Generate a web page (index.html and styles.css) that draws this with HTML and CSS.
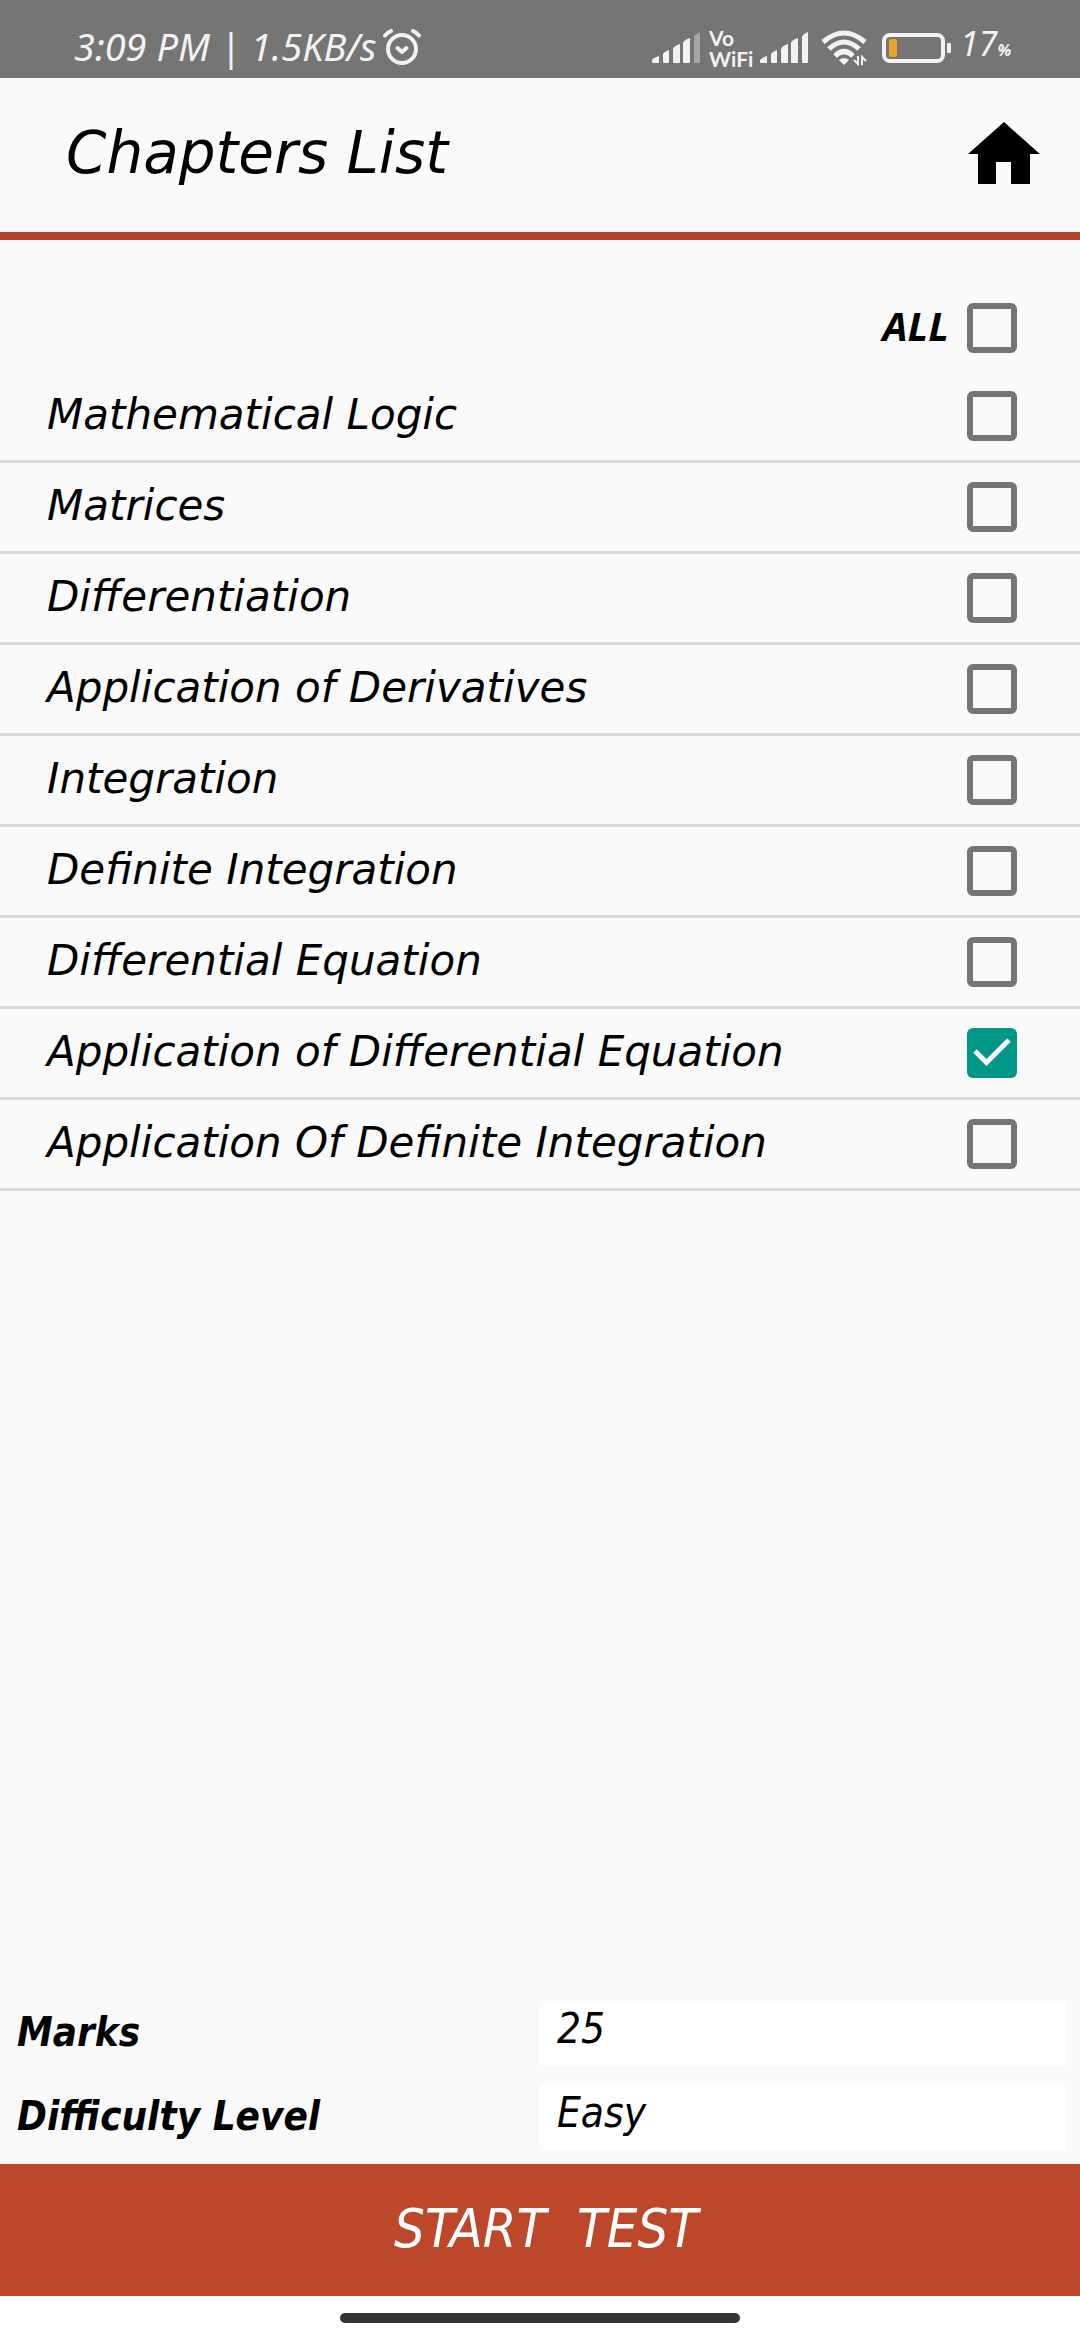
FILE: index.html
```html
<!DOCTYPE html>
<html lang="en">
<head>
  <meta charset="UTF-8">
  <meta name="viewport" content="width=device-width, initial-scale=1.0">
  <title>Chapters List</title>
  <link rel="stylesheet" href="styles.css">
</head>
<body>
  <div class="status-bar">
    <div class="status-left">
      <span>3:09 PM | 1.5KB/s</span>
      <svg class="alarm-icon" viewBox="0 0 40 38" width="40" height="38" fill="none" stroke="#f2f2f2" stroke-width="4" stroke-linecap="round">
        <circle cx="20" cy="20" r="14"/>
        <path d="M15.500 19L20 23L24.500 19" stroke-linejoin="round"/>
        <path d="M3 6.500Q5.500 3.500 9 2M31 2Q34.500 3.500 37 6.500"/>
      </svg>
    </div>
    <div class="status-right">
      <svg class="signal-icon" viewBox="0 0 48 32" width="48" height="32" fill="#f2f2f2">
        <path d="M0 28Q1 26 7 24V31H1Q0 31 0 30Z"/>
        <path d="M11 22Q12 20 17 18V30Q17 31 16 31H12Q11 31 11 30Z"/>
        <path d="M21 17Q22 14 28 12V30Q28 31 27 31H22Q21 31 21 30Z"/>
        <path d="M31 11Q32 8 38 6V30Q38 31 37 31H32Q31 31 31 30Z"/>
        <path d="M42 5Q43 2 48 0V30Q48 31 47 31H43Q42 31 42 30Z" fill="#a6a6a6"/>
      </svg>
      <span class="vowifi">Vo<br>WiFi</span>
      <svg class="signal-icon" viewBox="0 0 48 32" width="48" height="32" fill="#f2f2f2">
        <path d="M0 28Q1 26 7 24V31H1Q0 31 0 30Z"/>
        <path d="M11 22Q12 20 17 18V30Q17 31 16 31H12Q11 31 11 30Z"/>
        <path d="M21 17Q22 14 28 12V30Q28 31 27 31H22Q21 31 21 30Z"/>
        <path d="M31 11Q32 8 38 6V30Q38 31 37 31H32Q31 31 31 30Z"/>
        <path d="M42 5Q43 2 48 0V30Q48 31 47 31H43Q42 31 42 30Z"/>
      </svg>
      <svg class="wifi-icon" viewBox="0 0 46 36" width="46" height="36" fill="none" stroke="#f2f2f2" stroke-width="5">
        <path d="M2 12Q23 -6 44 12"/>
        <path d="M8 19Q23 5 38 19"/>
        <path d="M14 26Q23 17 32 26"/>
        <path d="M18 30Q23 26 28 30L23 35Z" fill="#f2f2f2" stroke="none"/>
        <path d="M37 26V34L33 30M41 35V27L45 31" stroke-width="2"/>
      </svg>
      <svg class="battery-icon" viewBox="0 0 70 30" width="70" height="30">
        <rect x="2" y="2" width="59" height="26" rx="6" fill="none" stroke="#f2f2f2" stroke-width="4"/>
        <rect x="7" y="6" width="8" height="18" rx="2" fill="#eba328"/>
        <rect x="65" y="10" width="4" height="10" rx="1" fill="#f2f2f2"/>
      </svg>
      <span class="battery-level">17<small>%</small></span>
    </div>
  </div>

  <header class="header">
    <h1>Chapters List</h1>
    <a href="#" class="home-link" aria-label="Home">
      <svg viewBox="0 0 72 63" width="72" height="63">
        <path d="M36 0L72 32H62V62H43V40H28V62H10V32H0Z" fill="#000"/>
      </svg>
    </a>
  </header>

  <main class="chapters">
    <label class="chapter all"><span>ALL</span><input type="checkbox"></label>
    <label class="chapter"><span>Mathematical Logic</span><input type="checkbox"></label>
    <label class="chapter"><span>Matrices</span><input type="checkbox"></label>
    <label class="chapter"><span>Differentiation</span><input type="checkbox"></label>
    <label class="chapter"><span>Application of Derivatives</span><input type="checkbox"></label>
    <label class="chapter"><span>Integration</span><input type="checkbox"></label>
    <label class="chapter"><span>Definite Integration</span><input type="checkbox"></label>
    <label class="chapter"><span>Differential Equation</span><input type="checkbox"></label>
    <label class="chapter"><span>Application of Differential Equation</span><input type="checkbox" checked></label>
    <label class="chapter"><span>Application Of Definite Integration</span><input type="checkbox"></label>
  </main>

  <form class="options">
    <div class="option">
      <label for="marks">Marks</label>
      <select id="marks"><option>25</option></select>
    </div>
    <div class="option">
      <label for="level">Difficulty Level</label>
      <select id="level"><option>Easy</option></select>
    </div>
  </form>
  <button type="button" class="start-btn">START&nbsp; TEST</button>

  <div class="nav-bar"><div class="nav-pill"></div></div>
</body>
</html>
```

FILE: styles.css
```css
* { box-sizing: border-box; }
body { margin: 0; min-height: 100vh; display: flex; flex-direction: column; background: #fafafa; color: #000; font-family: 'DejaVu Sans', sans-serif; font-style: italic; font-size: 42px; }

.status-bar { display: flex; justify-content: space-between; align-items: center; height: 78px; padding: 18px 71px 0 74px; background: #757575; color: #f2f2f2; font-family: 'Noto Sans', sans-serif; font-size: 38px; line-height: 56px; }
.status-left { display: flex; align-items: center; gap: 6px; }
.status-left span, .battery-level { padding-bottom: 4px; }
.status-right { display: flex; align-items: center; }
.vowifi { margin: 0 9px; width: 42px; font-family: Lato, sans-serif; font-style: normal; font-weight: bold; font-size: 21px; line-height: 21px; }
.wifi-icon { margin: 0 15px 0 13px; }
.battery-level { margin-left: 8px; width: 49px; font-size: 34px; white-space: nowrap; }
.battery-level small { font-size: 16px; font-weight: bold; }

.header { display: flex; justify-content: space-between; align-items: center; height: 162px; padding: 0 40px 4px 66px; border-bottom: 8px solid #b1442b; }
.header h1 { margin: 0; font-size: 58px; font-weight: normal; line-height: 80px; }
.home-link { display: flex; }

.chapters { flex: 1; padding-top: 44px; }
.chapter { display: flex; justify-content: space-between; align-items: center; height: 91px; padding: 0 63px 0 47px; border-bottom: 3px solid #dadada; cursor: pointer; }
.chapter span, .option label { padding-bottom: 4px; }
.chapter.all { justify-content: flex-end; gap: 18px; height: 88px; border-bottom: none; font-family: 'Noto Sans', sans-serif; font-size: 40px; font-weight: bold; line-height: 48px; }
.chapter input { appearance: none; width: 50px; height: 50px; margin: 0; border: 6px solid #757575; border-radius: 6px; cursor: pointer; }
.chapter input:checked { border: none; background: #009688 url("data:image/svg+xml,<svg xmlns='http://www.w3.org/2000/svg' viewBox='0 0 50 50'><path d='M8 23L19.500 34.500L42 12' fill='none' stroke='white' stroke-width='5'/></svg>"); }

.options { display: flex; flex-direction: column; gap: 19px; padding-bottom: 14px; }
.option { display: grid; grid-template-columns: 1fr 1fr; align-items: center; height: 65px; }
.option label { padding-left: 17px; font-family: 'DejaVu Sans Condensed', 'DejaVu Sans', sans-serif; font-size: 40px; font-weight: bold; }
.option select { appearance: none; height: 65px; margin-right: 14px; padding: 0 17px 10px; border: none; border-radius: 0; background: #fff; color: #000; font: inherit; font-family: 'DejaVu Sans Condensed', 'DejaVu Sans', sans-serif; }
.start-btn { height: 132px; padding: 0 0 4px 12px; border: none; background: #bd472a; color: #fff; font: italic 54px 'DejaVu Sans Condensed', 'DejaVu Sans', sans-serif; cursor: pointer; }
.start-btn:hover { background: #b1442b; }

.nav-bar { display: flex; justify-content: center; padding: 17px 0; background: #fff; }
.nav-pill { width: 37%; height: 10px; border-radius: 5px; background: #333; }
```
